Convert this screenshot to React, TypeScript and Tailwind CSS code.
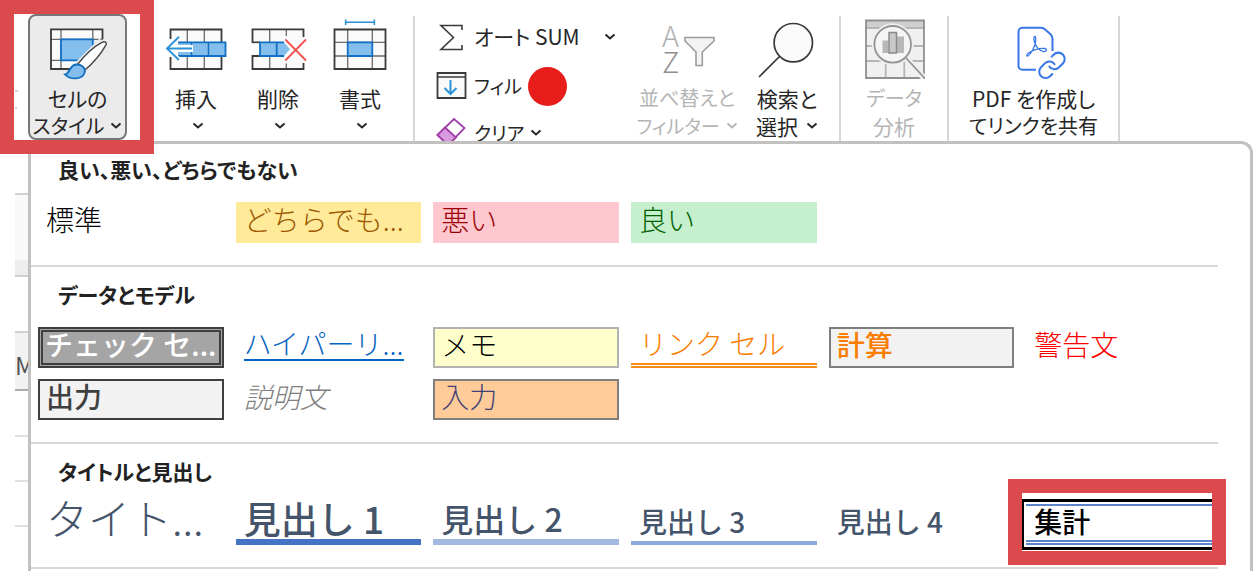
import type { ReactNode } from 'react'
import clsx from 'clsx'

type StyleCell = { label: string; box: string; text?: string; selected?: boolean };
type Section = { title: string; cells: StyleCell[] };

const sections: Section[] = [
  {
    title: '良い、悪い、どちらでもない',
    cells: [
      { label: '標準', box: 'pb-2 pl-2 text-[28px] text-black' },
      { label: 'どちらでも...', box: 'pb-2 pl-2 text-[28px] bg-[#ffea9a] text-[#9c5700]' },
      { label: '悪い', box: 'pb-2 pl-2 text-[28px] bg-[#ffc7ce] text-[#9c0006]' },
      { label: '良い', box: 'pb-2 pl-2 text-[28px] bg-[#c6efce] text-[#006100]' },
    ],
  },
  {
    title: 'データとモデル',
    cells: [
      { label: 'チェック セ...', box: 'border-[5px] border-double border-[#3f3f3f] bg-[#a5a5a5] pb-2 pl-0.5 text-[28px] text-white font-medium' },
      { label: 'ハイパーリ...', box: 'pb-2 pl-2 text-[28px] text-[#0563c1]', text: 'border-b-2 border-[#0563c1]' },
      { label: 'メモ', box: 'border-2 border-[#b2b2b2] bg-[#ffffcc] pb-2 pl-1.5 text-[28px] text-black' },
      { label: 'リンク セル', box: 'border-b-[5px] border-double border-[#ff8b1a] pb-1 pl-2 text-[28px] text-[#fa7d00]' },
      { label: '計算', box: 'border-2 border-[#7f7f7f] bg-[#f2f2f2] pb-2 pl-1.5 text-[28px] text-[#fa7d00] font-medium' },
      { label: '警告文', box: 'pb-2 pl-2 text-[28px] text-[#ff0000]' },
      { label: '出力', box: 'border-2 border-[#3f3f3f] bg-[#f2f2f2] pb-2 pl-1.5 text-[28px] text-[#3f3f3f] font-medium' },
      { label: '説明文', box: 'pb-2 pl-2 text-[28px] text-[#7f7f7f] italic' },
      { label: '入力', box: 'border-2 border-[#7f7f7f] bg-[#ffcc99] pb-2 pl-1.5 text-[28px] text-[#3f3f76]' },
    ],
  },
  {
    title: 'タイトルと見出し',
    cells: [
      { label: 'タイト...', box: 'pb-4 pl-2 text-[42px] text-[#44546a]' },
      { label: '見出し 1', box: 'border-b-[6px] border-[#4472c4] pb-2 pl-2 text-[37px] text-[#44546a] font-medium' },
      { label: '見出し 2', box: 'border-b-[6px] border-[#a1b8e1] pb-2 pl-2 text-[32px] text-[#44546a] font-medium' },
      { label: '見出し 3', box: 'border-b-4 border-[#8ea9db] pb-1 pl-2 text-[28px] text-[#44546a] font-medium' },
      { label: '見出し 4', box: 'pb-2 pl-2 text-[28px] text-[#44546a] font-medium' },
      { label: '集計', box: 'pb-2 pl-2 text-[28px] text-black font-medium', selected: true },
    ],
  },
];

// heights of the worksheet rows that stay visible left of the gallery
const sheetRows = [
  'h-[52px]',
  'h-[67px] border-t-2 border-[#d0d0d0] bg-[#f9f9f9]',
  'h-[15px] bg-[#eeeeee]',
  'h-[56px] border-t-2 border-[#d0d0d0]',
  'h-[60px] border-y-2 border-t-[#d0d0d0] border-b-[#ababab] bg-[#f2f2f2]',
  'h-[44px]',
  'h-[45px] border-t-2 border-[#e1e1e1]',
  'h-[45px] border-t-2 border-[#e1e1e1]',
  'h-[45px] border-t-2 border-[#e1e1e1]',
];

function Chevron() {
  return (
    <svg className="inline-block h-2 w-3 shrink-0" viewBox="0 0 12 8" fill="none" stroke="currentColor" strokeWidth="2">
      <path d="M1.5 1.5 6 5.5l4.5-4" />
    </svg>
  )
}

function ChevronLine() {
  return <span className="flex h-7 items-center pl-1"><Chevron /></span>
}

function Icon({ children }: { children: ReactNode }) {
  return (
    <svg className="mt-1.5 mb-1 size-[60px] shrink-0 overflow-visible" viewBox="0 0 60 60" fill="none">
      {children}
    </svg>
  )
}

function RibbonButton({ icon, className, children, disabled }: { icon: ReactNode; className: string; children: ReactNode; disabled?: boolean }) {
  return (
    <button
      disabled={disabled}
      className={clsx('flex shrink-0 flex-col items-center leading-7 whitespace-nowrap', disabled && 'text-[#b5b5b5]', className)}
    >
      <Icon>{icon}</Icon>
      {children}
    </button>
  )
}

function Divider() {
  return <div className="mt-0.5 w-0.5 shrink-0 bg-[#d6d6d6]" />
}

const cellStylesIcon = (
  <>
    <path d="M3 9.3h51.5v10H45v21l-15 8.700H3z" fill="#fafafa" />
    <path d="M13 9.3V49M44.8 9.3v10M3 19.3h51.5M3 40.3h10" stroke="#6b6b6b" strokeWidth="1.3" />
    <path d="M22 49H3V9.3h51.5v10" stroke="#3b3a39" strokeWidth="1.8" />
    <path d="M13 19.3h31.800V30L33 40.3H13z" fill="#83beec" />
    <path d="M44.8 27v-7.700H13v21h18" stroke="#1170c4" strokeWidth="1.8" />
    <path d="M55 22 30 47" stroke="#ebebeb" strokeWidth="10" />
    <path d="M29.500 44.500C36 36 46 26.500 54 22.300c3-1.500 5 0 4 2.500C54 32 45 43 37 50c-1-3-3.500-5-7.500-5.500z" fill="#fff" stroke="#4a4a4a" strokeWidth="1.500" />
    <path d="M17 54.500c5-.5 4-9 11-10 6-.3 10 4 8.500 8.500C34 60 22 60 17 54.500z" fill="#83beec" stroke="#1170c4" strokeWidth="1.800" />
  </>
);

const insertIcon = (
  <>
    <path d="M4.500 9.500h51V49h-51z" fill="#fafafa" />
    <path d="M21.300 9.500V49M38.300 9.500V49" stroke="#6b6b6b" strokeWidth="1.300" />
    <path d="M4.500 19V9.500h51V22M4.500 37v12h51V36" stroke="#3b3a39" strokeWidth="1.800" />
    <path d="M12 22.300h47.500V36H12z" fill="#83beec" />
    <path d="M12 22.300h47.500V36H12" stroke="#1170c4" strokeWidth="1.800" />
    <path d="M42.500 22.300V36M25.500 22.300V36" stroke="#1170c4" strokeWidth="1.500" />
    <path d="M0 28.500h27" stroke="#fff" strokeWidth="7" />
    <path d="M14 16 1.500 28.500 14 41" stroke="#fff" strokeWidth="5" />
    <path d="M1 28.500h25M13 16.700 1 28.500 13 40" stroke="#2b92d8" strokeWidth="1.900" />
  </>
);

const deleteIcon = (
  <>
    <path d="M4.500 9.500h51V49h-51z" fill="#fafafa" />
    <path d="M21.700 9.500v13M38.300 9.500V16M21.700 36v13M38.300 43.500V49" stroke="#6b6b6b" strokeWidth="1.300" />
    <path d="M12 22.300H4.500v-13h51V17M12 36H4.500v13h51v-6" stroke="#3b3a39" strokeWidth="1.800" />
    <path d="M2 23.500h9v11.500H2z" fill="#fff" />
    <path d="M12 22.300h24l6 7-6 6.700H12z" fill="#83beec" />
    <path d="M36 22.300H12V36h24M28.700 22.300V36" stroke="#1170c4" strokeWidth="1.800" />
    <path d="m37.300 19.500 20.700 21M58 19.500l-20.700 21" stroke="#fff" strokeWidth="4.500" />
    <path d="m37.300 19.500 20.700 21M58 19.500l-20.700 21" stroke="#f25250" strokeWidth="1.900" />
  </>
);

const formatIcon = (
  <>
    <path d="M4.500 9.500h51V49h-51z" fill="#fafafa" />
    <path d="M17.700 9.500V49M42.300 9.500V49M4.500 22.300h51M4.500 36h51" stroke="#6b6b6b" strokeWidth="1.300" />
    <path d="M4.500 9.500h51V49h-51z" stroke="#3b3a39" strokeWidth="1.800" />
    <path d="M17.700 22.300h24.600V36H17.700z" fill="#83beec" stroke="#1170c4" strokeWidth="1.800" />
    <path d="M15.700 2.300h28.600M15.700-.5v5.500M44.300-.5v5.500" stroke="#2b92d8" strokeWidth="1.600" />
  </>
);

const sortIcon = (
  <>
    <text x="5" y="27" fontSize="29" fill="#b0b0b0" className="font-light">A</text>
    <text x="5" y="53" fontSize="29" fill="#8f8f8f" className="font-light">Z</text>
    <path d="M28 17.500h29v3.500L45.300 32v13.500H39V32L28 21z" fill="#f3f3f3" stroke="#9b9b9b" strokeWidth="1.600" />
  </>
);

const searchIcon = (
  <>
    <circle cx="36.300" cy="22.700" r="19.200" fill="#fafafa" stroke="#3b3a39" strokeWidth="1.700" />
    <path d="M22.500 36.500 2 57" stroke="#3b3a39" strokeWidth="1.700" />
  </>
);

const analysisIcon = (
  <>
    <path d="M2 .500h58V58H2z" fill="#f0f0f0" />
    <path d="M2 .500h58V8H2z" fill="#cfcfcf" />
    <path d="M2 8h58M2 26h58M2 41h58M21.700 41v17M40.300 41v17" stroke="#b5b5b5" strokeWidth="1.800" />
    <path d="M2 .500h58V58H2z" stroke="#909090" strokeWidth="1.800" />
    <path d="m42 38 18 20" stroke="#f0f0f0" strokeWidth="6" />
    <circle cx="28.700" cy="24.300" r="21" fill="#f0f0f0" />
    <circle cx="28.700" cy="24.300" r="18.300" fill="#f5f5f5" stroke="#939393" strokeWidth="1.800" />
    <path d="m42 38 18.500 20" stroke="#939393" strokeWidth="1.800" />
    <path d="M18.500 20.500h6V33h-6zM33 16.500h7V33h-7z" fill="#b8b8b8" />
    <path d="M25 12.500h7.500V33H25z" fill="#c8c8c8" stroke="#8a8a8a" strokeWidth="1.500" />
  </>
);

const pdfIcon = (
  <>
    <path d="M32 49.700H18.500a4 4 0 0 1-4-4v-34a4 4 0 0 1 4-4h18.500c2 0 3 .5 4.500 2l5 4.500c1.500 1.500 2 2.500 2 4.500V31" stroke="#3878e6" strokeWidth="2" />
    <path d="M31 16.500c-1.500 0-1.500 2.500-.5 5.500 1.500 4.500 5 9 9 9.500 3.500.3 4-2.500 1-3-4.500-.7-12 1.500-16 4.500-2.500 2-2 4 0 2.500 3-2.500 6.500-9 7-13.500.3-3 .3-5.500-.5-5.500z" stroke="#3878e6" strokeWidth="1.300" />
    <g transform="translate(32.600 30) scale(1.280)" stroke="#3878e6" strokeWidth="1.600" strokeLinecap="round">
      <path d="M10 13a5 5 0 0 0 7.540.540l3-3a5 5 0 0 0-7.070-7.070l-1.720 1.710" />
      <path d="M14 11a5 5 0 0 0-7.540-.540l-3 3a5 5 0 0 0 7.070 7.070l1.710-1.710" />
    </g>
  </>
);

function EditRow({ icon, children }: { icon: ReactNode; children: ReactNode }) {
  return (
    <div className="flex h-12 shrink-0 items-center whitespace-nowrap">
      <svg className="mr-2 size-[30px] shrink-0 overflow-visible" viewBox="0 0 30 30" fill="none">{icon}</svg>
      {children}
    </div>
  )
}

function Ribbon() {
  return (
    <div className="flex h-[141px] shrink-0 overflow-hidden pt-3.5 text-[21px] text-[#262626] [font-feature-settings:'palt']">
      <svg className="mt-[70px] h-8 w-7 shrink-0" viewBox="0 0 28 32" stroke="#c4c4c4" strokeWidth="1.500">
        <path d="M15 7h3M15 24h2" />
      </svg>
      <button className="flex h-[126px] w-[99px] shrink-0 flex-col items-center rounded-lg border-2 border-[#777] bg-[#ebebeb] leading-7 whitespace-nowrap">
        <svg className="my-1 size-[60px] shrink-0 overflow-visible" viewBox="0 0 60 60" fill="none">{cellStylesIcon}</svg>
        <span>セルの</span>
        <span className="flex items-center gap-1.5 text-[20px]">スタイル<Chevron /></span>
      </button>
      <div className="w-7 shrink-0" />
      <RibbonButton className="w-[82px]" icon={insertIcon}>挿入<ChevronLine /></RibbonButton>
      <RibbonButton className="w-[82px]" icon={deleteIcon}>削除<ChevronLine /></RibbonButton>
      <RibbonButton className="mr-3 w-[82px]" icon={formatIcon}>書式<ChevronLine /></RibbonButton>
      <Divider />
      <div className="flex w-[212px] shrink-0 flex-col pl-[21px]">
        <EditRow icon={<path d="M26 7V2.500H5L17.500 14.500 5 26.500h21V22" stroke="#3b3a39" strokeWidth="1.600" />}>
          <button className="flex items-center gap-6 pb-0.5">オート SUM<Chevron /></button>
        </EditRow>
        <EditRow
          icon={
            <>
              <path d="M1.500 2h28v25h-28z" fill="#fafafa" stroke="#3b3a39" strokeWidth="1.800" />
              <path d="M1.500 6h28" stroke="#3b3a39" strokeWidth="1.500" />
              <path d="M14.500 9v14M8.500 17l6 6 6-6" stroke="#2b92d8" strokeWidth="2" />
            </>
          }
        >
          <button className="text-[19px]">フィル</button>
          <span className="ml-1.5 size-[39px] rounded-full bg-[#e71d1c]" />
        </EditRow>
        <EditRow
          icon={
            <>
              <path d="M18 0 28.500 9 12 26 1.500 16z" fill="#fff" stroke="#a03fa8" strokeWidth="1.800" />
              <path d="M9 8.500 20 18.500 12 26 1.500 16z" fill="#d99be0" stroke="#a03fa8" strokeWidth="1.800" />
            </>
          }
        >
          <button className="flex items-center gap-1.5 pb-0.5 text-[19px]">クリア<Chevron /></button>
        </EditRow>
      </div>
      <RibbonButton className="w-[120px]" icon={sortIcon} disabled>
        <span className="text-[20px]">並べ替えと</span>
        <span className="flex items-center gap-1.5 text-[19px]">フィルター<Chevron /></span>
      </RibbonButton>
      <RibbonButton className="mr-3 w-20" icon={searchIcon}>
        <span>検索と</span>
        <span className="flex items-center gap-2">選択<Chevron /></span>
      </RibbonButton>
      <Divider />
      <RibbonButton className="w-[106px]" icon={analysisIcon} disabled>
        <span className="text-[20px]">データ</span>
        <span>分析</span>
      </RibbonButton>
      <Divider />
      <RibbonButton className="w-[169px]" icon={pdfIcon}>
        <span>PDF を作成し</span>
        <span className="text-[20px]">てリンクを共有</span>
      </RibbonButton>
      <Divider />
    </div>
  )
}

function GalleryCell({ cell }: { cell: StyleCell }) {
  return (
    <div className="relative h-[41px]">
      {cell.selected && (
        <div className="absolute -inset-x-1 -inset-y-[5px] border-y-[3px] border-l-2 border-black p-0.5">
          <div className="h-full border-t-2 border-b-[5px] border-[#5b84cc] [border-bottom-style:double]" />
        </div>
      )}
      <button className={clsx('relative flex size-full items-center text-left leading-8 whitespace-nowrap', cell.box)}>
        <span className={cell.text}>{cell.label}</span>
      </button>
      {cell.selected && <div className="absolute -top-[25px] -right-3.5 -bottom-5 -left-[18px] border-[14px] border-[#dc4a4d]" />}
    </div>
  )
}

function App() {
  return (
    <div className="relative flex h-screen flex-col overflow-hidden bg-white font-['Noto_Sans_CJK_JP',sans-serif]">
      <Ribbon />
      <div className="flex min-h-0 flex-1">
        <div className="ml-[15px] w-[13px] shrink-0 overflow-hidden">
          {sheetRows.map((row, i) => (
            <div key={i} className={clsx('flex items-center pt-2 text-[24px] text-[#555]', row)}>{i === 4 && 'M'}</div>
          ))}
        </div>
        <div className="min-w-0 flex-1 overflow-hidden rounded-tr-xl border-t-[3px] border-r-[3px] border-l-[3px] border-[#c3c1bf] bg-white pr-8">
          {sections.map((section) => (
            <section key={section.title} className="border-b-2 border-[#d8d8d8] pb-[22px] not-first:pt-0.5">
              <h2 className="mb-2 pl-[27px] text-[21px] leading-[50px] font-bold text-[#222] [font-feature-settings:'palt']">{section.title}</h2>
              <div className="grid grid-cols-6 gap-x-3 gap-y-[11px] pr-1.5 pl-[7px] font-light">
                {section.cells.map((cell) => <GalleryCell key={cell.label} cell={cell} />)}
              </div>
            </section>
          ))}
        </div>
      </div>
      <div className="absolute top-0 left-0 size-[154px] border-[14px] border-[#dc4a4d]" />
    </div>
  )
}

export default App
